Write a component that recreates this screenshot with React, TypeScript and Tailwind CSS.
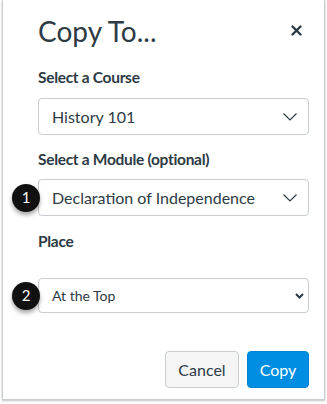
import { ReactNode } from "react";

const ThinChevron = () => (
  <svg width="14" height="8" viewBox="0 0 14 8" fill="none">
    <polyline points="0.5,0.5 7,7 13.5,0.5" stroke="#2d3b45" strokeWidth="1.2" />
  </svg>
);

const SmallChevron = () => (
  <svg width="9" height="6" viewBox="0 0 9 6" fill="none">
    <polyline points="1,1 4.5,4.5 8,1" stroke="#2d3b45" strokeWidth="2" />
  </svg>
);

const Badge = ({ n }: { n: number }) => (
  <div className="absolute left-[-27px] top-1/2 -translate-y-1/2 w-[28px] h-[28px] rounded-full bg-[#111] text-white flex items-center justify-center text-[15px] shadow-[0_3px_4px_rgba(0,0,0,0.35)]">
    {n}
  </div>
);

const Label = ({ children }: { children: ReactNode }) => (
  <div className="text-[15.5px] leading-[20px] font-bold tracking-[-0.3px] text-[#2d3b45]">{children}</div>
);

const SelectBox = ({
  value,
  badge,
  native,
}: {
  value: string;
  badge?: number;
  native?: boolean;
}) => (
  <div
    className={
      "relative flex items-center justify-between border border-[#c7cdd1] rounded-[4px] bg-white " +
      (native ? "h-[35px] pl-[13px] pr-[4px]" : "h-[37px] pl-[13px] pr-[11px]")
    }
  >
    {badge && <Badge n={badge} />}
    <span className={native ? "text-[14px] text-[#2d3b45]" : "text-[16px] text-[#2d3b45]"}>{value}</span>
    {native ? <SmallChevron /> : <ThinChevron />}
  </div>
);

export default function App() {
  return (
    <div className="w-[327px] h-[404px] bg-white" style={{ fontFamily: "Lato, 'Open Sans', sans-serif" }}>
      <div className="ml-[2px] w-[323px] h-[400px] border-x border-b border-[#c7cdd1] shadow-[0_1px_2px_rgba(0,0,0,0.25)] pl-[35px] pr-[15px] pt-[13px]">
        <div className="flex items-center justify-between h-[36px]">
          <h1 className="text-[28px] leading-[36px] text-[#2d3b45]">Copy To...</h1>
          <svg width="11" height="11" viewBox="0 0 11 11" className="mr-[7px] -mt-[2px]">
            <path d="M1.5 1.5 L9.5 9.5 M9.5 1.5 L1.5 9.5" stroke="#2d3b45" strokeWidth="2.4" strokeLinecap="round" />
          </svg>
        </div>

        <div className="mt-[18px]">
          <Label>Select a Course</Label>
        </div>
        <div className="mt-[11px]">
          <SelectBox value="History 101" />
        </div>

        <div className="mt-[14px]">
          <Label>Select a Module (optional)</Label>
        </div>
        <div className="mt-[10px]">
          <SelectBox value="Declaration of Independence" badge={1} />
        </div>

        <div className="mt-[15px]">
          <Label>Place</Label>
        </div>
        <div className="mt-[27px]">
          <SelectBox value="At the Top" badge={2} native />
        </div>

        <div className="mt-[38px] flex justify-end gap-[8px]">
          <button className="h-[37px] w-[74px] rounded-[4px] border border-[#c7cdd1] bg-[#f5f5f5] text-[16px] text-[#2d3b45]">
            Cancel
          </button>
          <button className="h-[37px] w-[62px] rounded-[4px] border border-[#0084d1] bg-[#008ee2] text-[16px] text-white">
            Copy
          </button>
        </div>
      </div>
    </div>
  );
}
